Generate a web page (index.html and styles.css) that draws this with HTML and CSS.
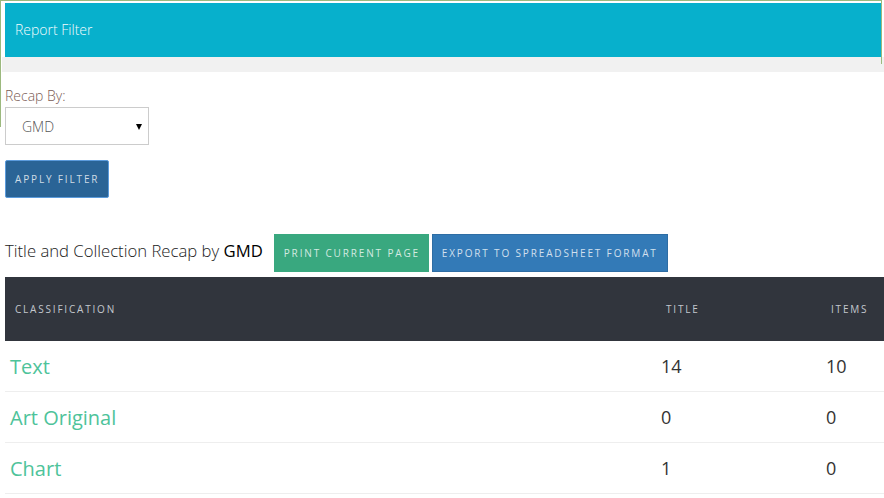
FILE: index.html
```html
<!DOCTYPE html>
<html lang="en">
<head>
<meta charset="utf-8">
<title>Report Filter</title>
<link rel="stylesheet" href="styles.css">
</head>
<body>
<div class="frame-top"></div>
<div class="frame-left"></div>
<div class="panel-head">Report Filter</div>
<div class="panel-strip"></div>
<form class="filter">
  <label class="field-label" for="recap">Recap By:</label>
  <div class="select-wrap">
    <select id="recap" class="select"><option>GMD</option></select>
  </div>
  <button type="button" class="btn btn-apply">APPLY FILTER</button>
</form>
<div class="recap-row">
  <h2 class="recap-title">Title and Collection Recap by <span class="strong">GMD</span></h2>
  <button type="button" class="btn btn-print">PRINT CURRENT PAGE</button>
  <button type="button" class="btn btn-export">EXPORT TO SPREADSHEET FORMAT</button>
</div>
<table class="recap-table">
  <colgroup>
    <col class="col-class">
    <col class="col-title">
    <col class="col-items">
  </colgroup>
  <thead>
    <tr><th>CLASSIFICATION</th><th>TITLE</th><th>ITEMS</th></tr>
  </thead>
  <tbody>
    <tr><td class="name">Text</td><td>14</td><td>10</td></tr>
    <tr><td class="name">Art Original</td><td>0</td><td>0</td></tr>
    <tr><td class="name">Chart</td><td>1</td><td>0</td></tr>
  </tbody>
</table>
</body>
</html>
```
FILE: styles.css
```css
html, body {
  margin: 0;
  padding: 0;
  background: #fff;
}
body {
  position: relative;
  width: 884px;
  font-family: "Open Sans", "Liberation Sans", sans-serif;
  color: #333;
}
.frame-top {
  position: absolute;
  left: 0;
  top: 0;
  width: 881px;
  height: 63px;
  border-top: 1px solid #9cb97e;
  border-right: 1px solid #9cb97e;
  pointer-events: none;
}
.frame-left {
  position: absolute;
  left: 0;
  top: 0;
  width: 0;
  height: 127px;
  border-left: 1px solid #9cb97e;
  pointer-events: none;
}
.panel-head {
  margin: 3px 3px 0 5px;
  padding: 0 0 1px 10px;
  height: 53px;
  background: #07b0cc;
  color: #f4fbfd;
  font-size: 14px;
  font-weight: 300;
  display: flex;
  align-items: center;
}
.panel-strip {
  height: 15px;
  margin-left: 2px;
  background: #f1f1f1;
}
.filter {
  padding-left: 5px;
  margin: 0;
}
.field-label {
  display: block;
  margin-top: 14px;
  margin-bottom: 1px;
  font-size: 14px;
  line-height: 20px;
  font-weight: 300;
  color: #7a5c55;
}
.select-wrap {
  position: relative;
  width: 144px;
  height: 38px;
}
.select {
  -webkit-appearance: none;
  appearance: none;
  box-sizing: border-box;
  width: 144px;
  height: 38px;
  margin: 0;
  padding: 0 0 0 16px;
  border: 1px solid #ccc;
  border-radius: 0;
  background: #fff;
  font-family: "Open Sans", "Liberation Sans", sans-serif;
  font-size: 14px;
  font-weight: 300;
  color: #555;
}
.select-wrap::after {
  content: "";
  position: absolute;
  left: 131px;
  top: 17px;
  width: 0;
  height: 0;
  border-left: 3px solid transparent;
  border-right: 3px solid transparent;
  border-top: 6px solid #000;
  pointer-events: none;
}
.btn {
  box-sizing: border-box;
  height: 38px;
  margin: 0;
  padding: 0 0 0 9px;
  border: 1px solid transparent;
  border-radius: 0;
  font-family: "Open Sans", "Liberation Sans", sans-serif;
  font-size: 10px;
  letter-spacing: 1.85px;
  white-space: nowrap;
  text-align: left;
  color: rgba(255, 255, 255, 0.78);
  cursor: pointer;
}
.btn-apply {
  display: block;
  margin-top: 15px;
  width: 104px;
  background: #2a6496;
  border-color: #5b9bdc;
  border-radius: 2px;
}
.recap-row {
  display: flex;
  align-items: center;
  margin-top: 36px;
  padding-left: 5px;
}
.recap-title {
  margin: 0 11px 6px 0;
  font-size: 16.7px;
  font-weight: 300;
  color: #222;
  white-space: nowrap;
}
.strong {
  font-weight: 400;
  color: #000;
}
.btn-print {
  width: 155px;
  background: #39a87f;
  border-color: #39a87f;
}
.btn-export {
  margin-left: 3px;
  width: 236px;
  background: #337ab7;
  border-color: #2e6da4;
}
.recap-table {
  margin: 5px 0 0 5px;
  width: 879px;
  border-collapse: collapse;
  table-layout: fixed;
}
.col-class { width: 651px; }
.col-title { width: 165px; }
.col-items { width: 63px; }
.recap-table th {
  height: 64px;
  padding: 0 0 0 10px;
  background: #31353d;
  color: #c3c7cd;
  font-size: 10px;
  font-weight: 400;
  letter-spacing: 1.8px;
  text-align: left;
}
.recap-table td {
  height: 50px;
  padding: 0 0 0 5px;
  border-bottom: 1px solid #eee;
  font-size: 18px;
  color: #333;
  vertical-align: middle;
}
.recap-table td.name {
  font-size: 20px;
  color: #4ec39a;
}
```
